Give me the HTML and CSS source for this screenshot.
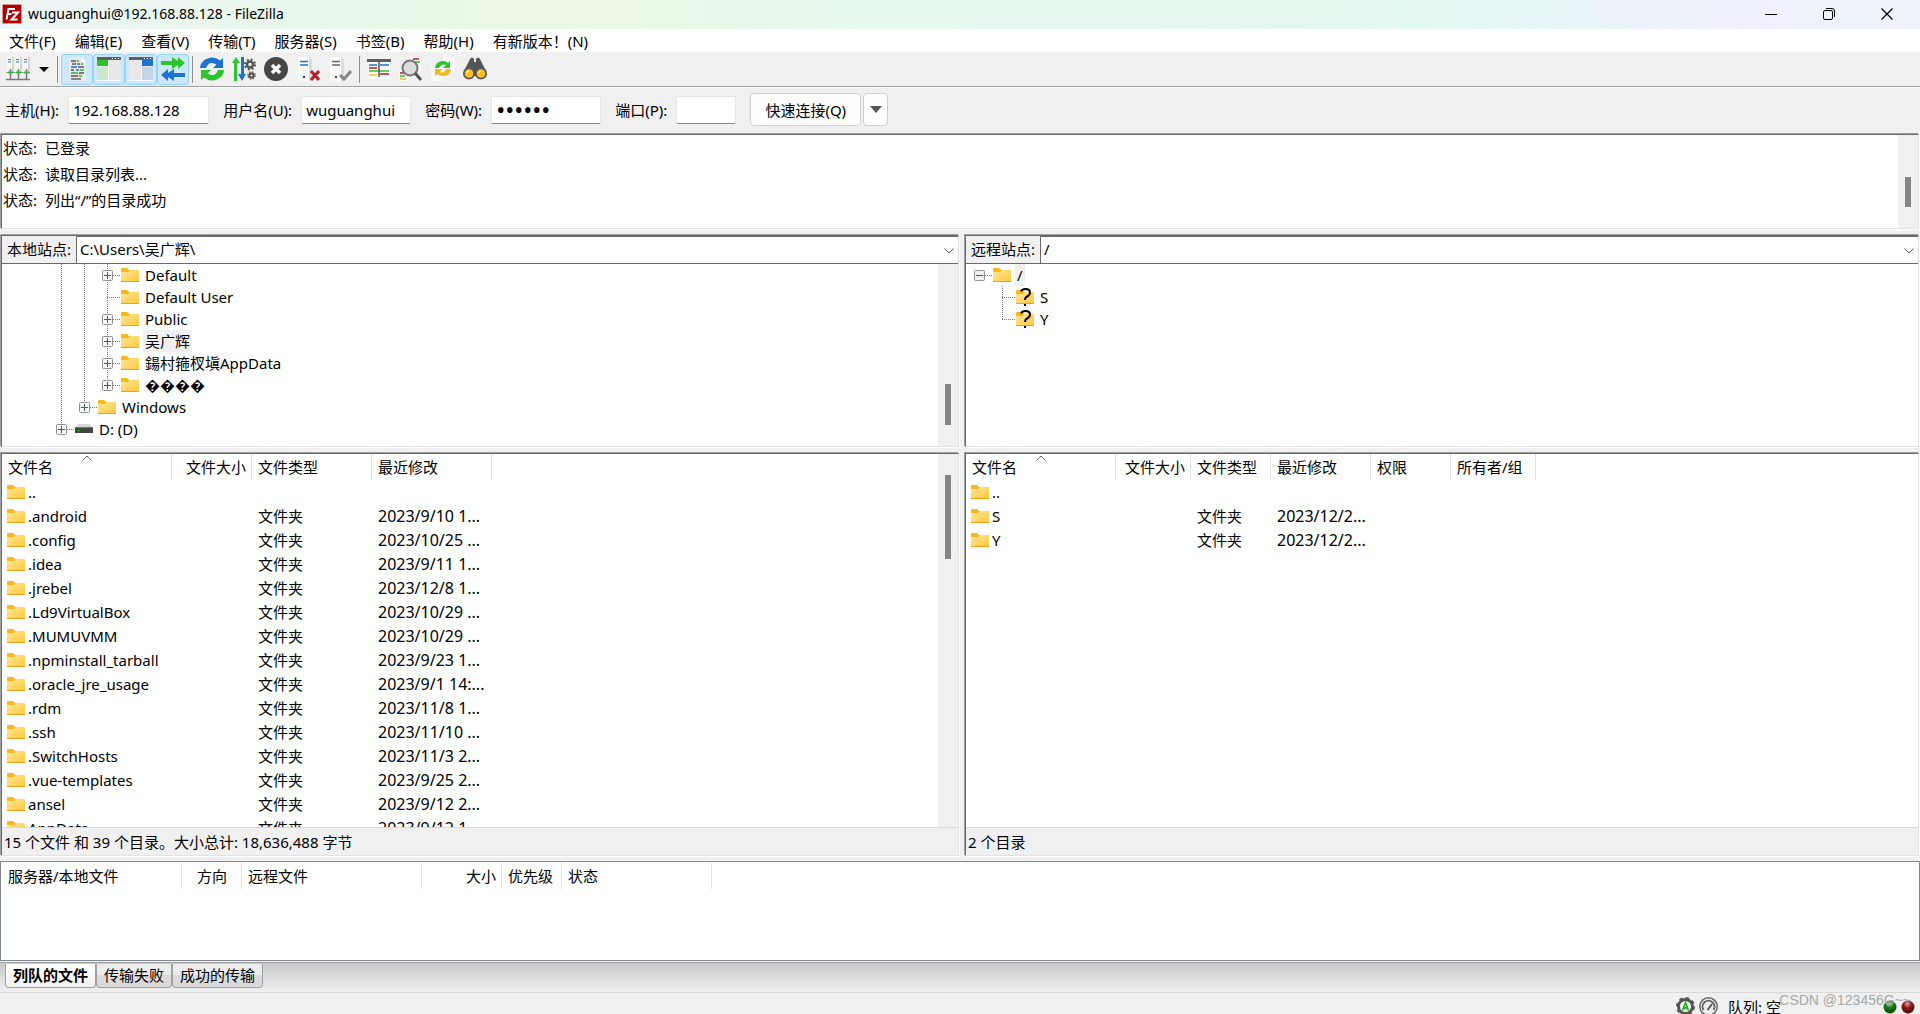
FILE: index.html
```html
<!DOCTYPE html>
<html lang="zh-CN">
<head>
<meta charset="utf-8">
<title>wuguanghui@192.168.88.128 - FileZilla</title>
<link rel="stylesheet" href="styles.css">
</head>
<body>
<svg class="defs" aria-hidden="true">
  <defs>
    <linearGradient id="fold" x1="0" y1="0" x2="1" y2="1"><stop offset="0" stop-color="#ffe79a"/><stop offset="1" stop-color="#ffc83a"/></linearGradient>
    <radialGradient id="ledG" cx=".45" cy=".25" r=".8"><stop offset="0" stop-color="#a8d8a8"/><stop offset=".4" stop-color="#1c7a1c"/><stop offset="1" stop-color="#054005"/></radialGradient>
    <radialGradient id="ledR" cx=".45" cy=".25" r=".8"><stop offset="0" stop-color="#e0a8a8"/><stop offset=".4" stop-color="#8a1c1c"/><stop offset="1" stop-color="#480505"/></radialGradient>
    <symbol id="folder" viewBox="0 0 18 14"><path d="M0 1q0-1 1-1h5l2 2h10v11H0z" fill="#f9b81c"/><path d="M0 4h7l2-2h9v12H0z" fill="url(#fold)"/><path d="M0 13h18v1H0z" fill="#e9a21a"/></symbol>
    <symbol id="plus" viewBox="0 0 11 11"><rect x=".5" y=".5" width="10" height="10" rx="1" fill="#f8f8f8" stroke="#919191"/><path d="M2 5.500h7M5.500 2v7" stroke="#3a569c"/></symbol>
    <symbol id="minus" viewBox="0 0 11 11"><rect x=".5" y=".5" width="10" height="10" rx="1" fill="#f0f0f0" stroke="#919191"/><path d="M2 5.500h7" stroke="#3a569c"/></symbol>
    <symbol id="unknown" viewBox="0 0 18 18"><path d="M0 3q0-1 1-1h5l2 2h10v11H0z" fill="#f9b81c"/><path d="M0 6h7l2-2h9v12H0z" fill="url(#fold)"/><path d="M0 15h18v1H0z" fill="#e9a21a"/><path d="M5 3.500Q6 1 9.500 1 14 1 14 4.500 14 7 11 8.500 9 9.500 9 12" fill="none" stroke="#000" stroke-width="2"/><path d="M8 16h2v2H8z"/></symbol>
    <symbol id="chev" viewBox="0 0 10 6"><path d="M.5.5 5 5 9.500.5" fill="none" stroke="#555"/></symbol>
    <symbol id="sort" viewBox="0 0 10 6"><path d="M.5 5.500 5 1l4.500 4.500" fill="none" stroke="#666"/></symbol>
  </defs>
</svg>
<div class="app">
  <header class="titlebar">
    <svg class="logo" viewBox="0 0 20 20"><rect x=".5" y=".5" width="19" height="19" fill="#b30000" stroke="#e8b0b0" stroke-dasharray="1 1"/><path d="M4.500 15.500 6.500 5H13M5.500 10h4M10 8.500h6L9.500 15.500h6" fill="none" stroke="#fff" stroke-width="2"/></svg>
    <h1 class="title">wuguanghui@192.168.88.128 - FileZilla</h1>
    <div class="winctl">
      <button aria-label="最小化"><svg width="12" height="12"><path d="M0 6.500h12" stroke="#000"/></svg></button>
      <button aria-label="还原"><svg width="12" height="12" fill="none" stroke="#000"><rect x=".5" y="2.500" width="9" height="9" rx="1.500"/><path d="M3 .5h6q2.500 0 2.500 2.500v6"/></svg></button>
      <button aria-label="关闭"><svg width="12" height="12"><path d="m.5.5 11 11m0-11-11 11" stroke="#000" stroke-width="1.200"/></svg></button>
    </div>
  </header>
  <nav class="menu">
    <button>文件(F)</button><button>编辑(E)</button><button>查看(V)</button><button>传输(T)</button><button>服务器(S)</button><button>书签(B)</button><button>帮助(H)</button><button>有新版本！(N)</button>
  </nav>
  <div class="toolbar">
    <button class="tool" aria-label="站点管理器"><svg viewBox="0 0 24 24"><g fill="#d6d6d6"><path d="M1 0h7v16H1zM9 0h7v16H9zM17 0h7v16h-7z"/></g><g fill="#fafafa"><path d="M1 0h5v16H1zM9 0h5v16H9zM17 0h5v16h-5z"/></g><path d="M2 2.500h3M10 2.500h3M18 2.500h3M2 5h3M10 5h3M18 5h3" stroke="#2a76c9"/><path d="M0 15.500h24" stroke="#999"/><path d="M4.500 12v11M12.500 12v11M20.500 12v11M0 22.500h24" stroke="#777" stroke-width="1.500"/><path d="M2 15.500h5M10 15.500h5M18 15.500h5" stroke="#36b636" stroke-width="2"/></svg></button>
    <button class="drop" aria-label="站点列表"><svg width="10" height="5"><path d="M0 0h10L5 5z"/></svg></button>
    <span class="sep"></span>
    <button class="tool on" aria-label="消息日志"><svg viewBox="0 0 24 24"><path d="M4 0h12l5 5v19H4z" fill="#e9e9ea"/><path d="m16 0 5 5h-5z" fill="#fff"/><g stroke-width="1.500"><path d="M6 4h5M7 7h4M13 10h6M6 13h3M14 16h5M6 19h7" stroke="#555"/><path d="M12 7h3M6 10h6M11 13h3" stroke="#1f6fd0"/><path d="M12 4h2M16 7h2M15 13h4M6 16h7M14 19h3" stroke="#28b828"/><path d="M6 22h10" stroke="#666"/></g></svg></button>
    <button class="tool on" aria-label="本地目录树"><svg viewBox="0 0 24 24"><path d="M0 0h24v24H0z" fill="#e8e8e8"/><path d="M0 0h24v3H0z" fill="#606060"/><path d="M15 1.500h1M18 1.500h1M21 1.500h1" stroke="#fff"/><path d="M0 3h11v6H0z" fill="#2bc52b"/><path d="M0 10h11v13H0z" fill="#cce8cc"/><path d="M11.500 3v21M0 23.500h24" stroke="#fafafa"/></svg></button>
    <button class="tool on" aria-label="远程目录树"><svg viewBox="0 0 24 24"><path d="M0 0h24v24H0z" fill="#e8e8e8"/><path d="M0 0h24v3H0z" fill="#606060"/><path d="M15 1.500h1M18 1.500h1M21 1.500h1" stroke="#fff"/><path d="M13 3h11v6H13z" fill="#1d74cf"/><path d="M13 10h11v13H13z" fill="#c4d5e8"/><path d="M12.500 3v21M0 23.500h24" stroke="#fafafa"/></svg></button>
    <button class="tool on" aria-label="传输队列"><svg viewBox="0 0 24 24"><path d="M0 4h11V0l6 4V0l7 6-7 6V8l-6 4V8H0z" fill="#2bc52b"/><path d="M24 16H13v-4l-6 4v-4l-7 6 7 6v-4l6 4v-4h11z" fill="#1d74cf"/></svg></button>
    <span class="sep"></span>
    <button class="tool" aria-label="刷新"><svg viewBox="0 0 24 24"><path d="M0 11A12 11 0 0 1 20 3.500L23 1v10H13l3.500-3.500Q9 3 6 11z" fill="#1d74cf"/><path d="M24 13A12 11 0 0 1 4 20.500L1 23V13h10l-3.500 3.500Q15 21 18 13z" fill="#2bc52b"/></svg></button>
    <button class="tool" aria-label="处理队列"><svg viewBox="0 0 24 24"><path d="M4 0 8 6H5v5h3H5v4h3H5v9H2v-9H0h2v-4H0h2V6H0z" fill="#2bc52b"/><path d="M9 0h3v17h2l-4 7-4-7h3z" fill="#1d74cf"/><g fill="none" stroke="#555"><circle cx="18" cy="7.500" r="3" stroke-width="2.500"/><circle cx="18" cy="7.500" r="5" stroke-width="2" stroke-dasharray="2 1.930"/><circle cx="19.500" cy="18.500" r="2" stroke-width="2"/><circle cx="19.500" cy="18.500" r="3.500" stroke-width="1.500" stroke-dasharray="1.500 1.250"/></g></svg></button>
    <button class="tool" aria-label="取消"><svg viewBox="0 0 24 24"><circle cx="12" cy="12" r="12" fill="#464646"/><path d="m8 8 8 8m0-8-8 8" stroke="#fff" stroke-width="3.500"/></svg></button>
    <button class="tool" aria-label="断开"><svg viewBox="0 0 24 24"><path d="M2 0h11l3 2v22H2z" fill="#dcdcdc"/><path d="M2 0h11v24H2z" fill="#fafafa"/><path d="M4 4.500h8M4 8h8" stroke="#1d74cf" stroke-width="1.500"/><path d="M7 19h2v2H7z" fill="#444"/><path d="m15 14 8 9m0-9-8 9" stroke="#b81d24" stroke-width="3"/></svg></button>
    <button class="tool" aria-label="重新连接"><svg viewBox="0 0 24 24"><path d="M2 0h11l3 2v22H2z" fill="#dcdcdc"/><path d="M2 0h11v24H2z" fill="#fafafa"/><path d="M4 4.500h8M4 8h8" stroke="#666" stroke-width="1.500"/><path d="M7 19h2v2H7z" fill="#444"/><path d="m12 18 4 4 7-8" fill="none" stroke="#858585" stroke-width="3"/></svg></button>
    <span class="sep"></span>
    <button class="tool" aria-label="目录比较"><svg viewBox="0 0 24 24"><path d="M1 3h22v19H1z" fill="#fafafa"/><path d="M0 2h24v3H0z" fill="#606060"/><g stroke-width="1.500"><path d="M2 11h8M13 17h9" stroke="#b81d24"/><path d="M13 8h9M2 8h8" stroke="#1d74cf"/><path d="M2 14h20" stroke="#2bc52b"/><path d="M2 18h8" stroke="#f5c021"/></g><path d="M12 5v15" stroke="#555" stroke-width="1.500"/></svg></button>
    <button class="tool" aria-label="搜索"><svg viewBox="0 0 24 24"><path d="M11 0h11v14H11zM0 12h10v12H0z" fill="#fafafa"/><path d="M14 2h6M1 16h4" stroke="#b81d24" stroke-width="1.500"/><path d="M16 5h5M1 19h5" stroke="#2bc52b" stroke-width="1.500"/><path d="M1 22h6" stroke="#f5c021" stroke-width="1.500"/><circle cx="11" cy="11" r="7.500" fill="#dcdcdc" stroke="#777" stroke-width="2"/><path d="m16 16 6 7" stroke="#555" stroke-width="3"/></svg></button>
    <button class="tool" aria-label="同步浏览"><svg viewBox="0 0 24 24"><path d="M12 0h12v15H12zM0 10h12v14H0z" fill="#fafafa"/><path d="M4 11Q5 4 12 4q3 0 5 2l2-2v7h-7l3-3q-5-2-7 3z" fill="#2bc52b"/><path d="M20 12q-1 7-8 7-3 0-5-2l-3 2v-7h7l-2 3q4 2 6-3z" fill="#f0b818"/></svg></button>
    <button class="tool" aria-label="查找文件"><svg viewBox="0 0 24 24"><path d="m1 14 6-12q2-3 4 0v3h2V2q2-3 4 0l6 12v5H1z" fill="#555"/><circle cx="6" cy="16.500" r="6" fill="#555"/><circle cx="18" cy="16.500" r="6" fill="#555"/><circle cx="6" cy="16.500" r="4.300" fill="#ffc020"/><circle cx="18" cy="16.500" r="4.300" fill="#ffc020"/><path d="M4 16q0-2 2-2M16 16q0-2 2-2" fill="none" stroke="#fff"/></svg></button>
  </div>
  <form class="quick">
    <label class="field">主机(H):<input class="host" type="text" value="192.168.88.128"></label>
    <label class="field">用户名(U):<input class="user" type="text" value="wuguanghui"></label>
    <label class="field">密码(W):<input class="pass" type="password" value="123456"></label>
    <label class="field">端口(P):<input class="port" type="text"></label>
    <div class="connect"><button class="btn go" type="button">快速连接(Q)</button><button class="btn more" type="button" aria-label="历史"><svg width="12" height="7"><path d="M0 0h12L6 7z" fill="#555"/></svg></button></div>
  </form>
  <section class="log sunken">
    <dl><dt>状态:</dt><dd>已登录</dd><dt>状态:</dt><dd>读取目录列表...</dd><dt>状态:</dt><dd>列出“/”的目录成功</dd></dl>
    <div class="scroll"><i class="thumb log-thumb"></i></div>
  </section>
  <main class="sites">
    <section class="site">
      <div class="treebox sunken">
        <div class="path"><label for="lp">本地站点:</label><div class="combo"><select id="lp"><option>C:\Users\吴广辉\</option></select><svg class="chev"><use href="#chev"/></svg></div></div>
        <div class="pane">
          <ul class="tree local">
            <li><i class="g v"></i><i class="g v"></i><i class="g v b"><svg><use href="#plus"/></svg></i><svg class="fi"><use href="#folder"/></svg><span>Default</span></li>
            <li><i class="g v"></i><i class="g v"></i><i class="g v h"></i><svg class="fi"><use href="#folder"/></svg><span>Default User</span></li>
            <li><i class="g v"></i><i class="g v"></i><i class="g v b"><svg><use href="#plus"/></svg></i><svg class="fi"><use href="#folder"/></svg><span>Public</span></li>
            <li><i class="g v"></i><i class="g v"></i><i class="g v b"><svg><use href="#plus"/></svg></i><svg class="fi"><use href="#folder"/></svg><span class="sel">吴广辉</span></li>
            <li><i class="g v"></i><i class="g v"></i><i class="g v b"><svg><use href="#plus"/></svg></i><svg class="fi"><use href="#folder"/></svg><span>鍚村箍杈塡AppData</span></li>
            <li><i class="g v"></i><i class="g v"></i><i class="g e b"><svg><use href="#plus"/></svg></i><svg class="fi"><use href="#folder"/></svg><span>����</span></li>
            <li><i class="g v"></i><i class="g e b"><svg><use href="#plus"/></svg></i><svg class="fi"><use href="#folder"/></svg><span>Windows</span></li>
            <li><i class="g e b"><svg><use href="#plus"/></svg></i><svg class="fi" viewBox="0 0 18 14"><path d="m3 2h12l3 4H0z" fill="#d8d8d8"/><path d="M0 5h18v6H0z" fill="#454545"/><path d="M0 5h18v1H0z" fill="#777"/><path d="M3 8h1v1H3z" fill="#3f3"/></svg><span>D: (D)</span></li>
          </ul>
          <div class="scroll"><i class="thumb tree-thumb"></i></div>
        </div>
      </div>
      <div class="listbox sunken">
        <div class="pane">
          <div class="view">
          <table class="files">
            <colgroup><col class="w170"><col class="w80"><col class="w120"><col class="w120"></colgroup>
            <thead><tr><th>文件名<svg class="sort"><use href="#sort"/></svg></th><th class="r">文件大小</th><th>文件类型</th><th>最近修改</th></tr></thead>
            <tbody>
            <tr><td><svg class="fi"><use href="#folder"/></svg>..</td><td></td><td></td><td></td></tr>
            <tr><td><svg class="fi"><use href="#folder"/></svg>.android</td><td></td><td>文件夹</td><td class="date">2023/9/10 1...</td></tr>
            <tr><td><svg class="fi"><use href="#folder"/></svg>.config</td><td></td><td>文件夹</td><td class="date">2023/10/25 ...</td></tr>
            <tr><td><svg class="fi"><use href="#folder"/></svg>.idea</td><td></td><td>文件夹</td><td class="date">2023/9/11 1...</td></tr>
            <tr><td><svg class="fi"><use href="#folder"/></svg>.jrebel</td><td></td><td>文件夹</td><td class="date">2023/12/8 1...</td></tr>
            <tr><td><svg class="fi"><use href="#folder"/></svg>.Ld9VirtualBox</td><td></td><td>文件夹</td><td class="date">2023/10/29 ...</td></tr>
            <tr><td><svg class="fi"><use href="#folder"/></svg>.MUMUVMM</td><td></td><td>文件夹</td><td class="date">2023/10/29 ...</td></tr>
            <tr><td><svg class="fi"><use href="#folder"/></svg>.npminstall_tarball</td><td></td><td>文件夹</td><td class="date">2023/9/23 1...</td></tr>
            <tr><td><svg class="fi"><use href="#folder"/></svg>.oracle_jre_usage</td><td></td><td>文件夹</td><td class="date">2023/9/1 14:...</td></tr>
            <tr><td><svg class="fi"><use href="#folder"/></svg>.rdm</td><td></td><td>文件夹</td><td class="date">2023/11/8 1...</td></tr>
            <tr><td><svg class="fi"><use href="#folder"/></svg>.ssh</td><td></td><td>文件夹</td><td class="date">2023/11/10 ...</td></tr>
            <tr><td><svg class="fi"><use href="#folder"/></svg>.SwitchHosts</td><td></td><td>文件夹</td><td class="date">2023/11/3 2...</td></tr>
            <tr><td><svg class="fi"><use href="#folder"/></svg>.vue-templates</td><td></td><td>文件夹</td><td class="date">2023/9/25 2...</td></tr>
            <tr><td><svg class="fi"><use href="#folder"/></svg>ansel</td><td></td><td>文件夹</td><td class="date">2023/9/12 2...</td></tr>
            <tr><td><svg class="fi"><use href="#folder"/></svg>AppData</td><td></td><td>文件夹</td><td class="date">2023/9/12 1...</td></tr>
            </tbody>
          </table>
          </div>
          <div class="scroll"><i class="thumb list-thumb"></i></div>
        </div>
        <p class="summary">15 个文件 和 39 个目录。大小总计: 18,636,488 字节</p>
      </div>
    </section>
    <section class="site">
      <div class="treebox sunken">
        <div class="path"><label for="rp">远程站点:</label><div class="combo"><select id="rp"><option>/</option></select><svg class="chev"><use href="#chev"/></svg></div></div>
        <div class="pane">
          <ul class="tree">
            <li><i class="g b"><svg><use href="#minus"/></svg></i><svg class="fi"><use href="#folder"/></svg><span class="sel">/</span></li>
            <li><i class="g"></i><i class="g v h"></i><svg class="fi q"><use href="#unknown"/></svg><span>S</span></li>
            <li><i class="g"></i><i class="g e h"></i><svg class="fi q"><use href="#unknown"/></svg><span>Y</span></li>
          </ul>
        </div>
      </div>
      <div class="listbox sunken">
        <div class="pane">
          <div class="view">
          <table class="files">
            <colgroup><col class="w150"><col class="w75"><col class="w80"><col class="w100"><col class="w80"><col class="w85"></colgroup>
            <thead><tr><th>文件名<svg class="sort"><use href="#sort"/></svg></th><th class="r">文件大小</th><th>文件类型</th><th>最近修改</th><th>权限</th><th>所有者/组</th></tr></thead>
            <tbody>
            <tr><td><svg class="fi"><use href="#folder"/></svg>..</td><td></td><td></td><td></td><td></td><td></td></tr>
            <tr><td><svg class="fi"><use href="#folder"/></svg>S</td><td></td><td>文件夹</td><td class="date">2023/12/2...</td><td></td><td></td></tr>
            <tr><td><svg class="fi"><use href="#folder"/></svg>Y</td><td></td><td>文件夹</td><td class="date">2023/12/2...</td><td></td><td></td></tr>
            </tbody>
          </table>
          </div>
        </div>
        <p class="summary">2 个目录</p>
      </div>
    </section>
  </main>
  <section class="queue">
    <table class="files">
      <colgroup><col class="w180"><col class="w60"><col class="w180"><col class="w80"><col class="w60"><col class="w150"></colgroup>
      <thead><tr><th>服务器/本地文件</th><th class="c">方向</th><th>远程文件</th><th class="r">大小</th><th>优先级</th><th>状态</th></tr></thead>
    </table>
  </section>
  <div class="tabs" role="tablist">
    <button role="tab" aria-selected="true" class="tab active">列队的文件</button><button role="tab" class="tab">传输失败</button><button role="tab" class="tab">成功的传输</button>
  </div>
  <footer class="status">
    <svg width="19" height="19" viewBox="0 0 19 19"><circle cx="9.500" cy="9.500" r="7" fill="#fff" stroke="#555" stroke-width="3"/><circle cx="9.500" cy="9.500" r="8.500" fill="none" stroke="#555" stroke-width="2" stroke-dasharray="3.340"/><path d="M6.500 13.500 9.500 5.500l3 8M7.500 11h4" fill="none" stroke="#1fb81f" stroke-width="1.800"/></svg>
    <svg width="19" height="19" viewBox="0 0 19 19"><circle cx="9.500" cy="9.500" r="8.700" fill="#eee" stroke="#666" stroke-width="1.500"/><path d="M4.500 13a6 6 0 1 1 10 0" fill="none" stroke="#666" stroke-width="2"/><path d="m8.500 13 4.500-6" stroke="#555" stroke-width="2"/></svg>
    <span class="qsize">队列: 空</span>
    <span class="leds"><svg width="14" height="14"><circle cx="7" cy="7" r="6.500" fill="url(#ledG)"/></svg><svg width="14" height="14"><circle cx="7" cy="7" r="6.500" fill="url(#ledR)"/></svg></span>
    <span class="mark">CSDN @123456G~~</span>
  </footer>
</div>
</body>
</html>
```
FILE: styles.css
```css
* { box-sizing: border-box; }
body {
  margin: 0;
  font: 15px/22px "Noto Sans", "Noto Sans CJK SC", sans-serif;
  color: #000;
  background: #f0f0f0;
  overflow: hidden;
}
button, input, select { font: inherit; color: inherit; }
button { padding: 0; border: 0; background: none; }
svg { display: block; flex: none; }
ul, dl, dd, p, h1 { margin: 0; padding: 0; }
.defs { position: absolute; width: 0; height: 0; }

.app { display: flex; flex-direction: column; height: 100vh; }

/* title bar and menu */
.titlebar {
  display: flex;
  align-items: center;
  height: 29px;
  flex: none;
  padding: 0 4px 1px 2px;
  background: linear-gradient(90deg, #eef5f6, #e8f7ea 16%, #ebf8e5 30%, #e6f7ec 45%, #e5f7ec 68%, #e3f7f4 76%, #eef1fb 89%, #eff3fb);
}
.logo { width: 20px; height: 20px; }
.title { flex: 1; margin-left: 6px; font-size: 14px; font-weight: 400; }
.winctl { display: flex; }
.winctl button { width: 58px; height: 28px; display: grid; place-items: center; }
.menu { display: flex; height: 23px; flex: none; padding-left: 9px; gap: 19px; background: #fff; }

/* toolbar */
.toolbar {
  display: flex;
  align-items: center;
  height: 36px;
  flex: none;
  padding: 0 2px 1px;
  border-bottom: 1px solid #fff;
  box-shadow: inset 0 -1px #a0a0a0;
}
.tool { width: 32px; height: 31px; display: grid; place-items: center; border: 1px solid transparent; border-radius: 3px; }
.tool svg { width: 24px; height: 24px; }
.tool.on { background: #cce8ff; border-color: #99d1ff; }
.drop { width: 20px; height: 31px; display: grid; place-items: center; }
.sep { width: 1px; height: 27px; margin: 0 3px; background: #8d8d8d; }

/* quick connect */
.quick { display: flex; align-items: center; height: 45px; flex: none; padding: 0 5px 2px; gap: 14px; }
.field { display: flex; align-items: center; gap: 9px; white-space: nowrap; }
.field input {
  height: 28px;
  padding: 0 4px;
  border: 1px solid #e5e5e5;
  border-bottom-color: #868686;
  border-radius: 2px;
  background: #fff;
}
.host { width: 141px; }
.user, .pass { width: 110px; }
.field .pass { font-size: 24px; }
.port { width: 60px; }
.connect { display: flex; gap: 2px; }
.btn { height: 33px; border: 1px solid #d0d0d0; border-radius: 4px; background: #fdfdfd; }
.go { width: 111px; }
.more { width: 25px; display: grid; place-items: center; }

/* sunken frames */
.sunken {
  margin: 1px;
  border: 1px solid;
  border-color: #696969 #e3e3e3 #e3e3e3 #696969;
  box-shadow: -1px -1px #a0a0a0, 1px 1px #fff;
  background: #fff;
}
.scroll { width: 20px; flex: none; display: flex; flex-direction: column; align-items: center; background: #f0f0f0; }
.thumb { width: 6px; background: #858585; }
.log-thumb { height: 30px; margin-top: 42px; }
.tree-thumb { height: 41px; margin-top: 120px; }
.list-thumb { height: 84px; margin-top: 21px; }

.log { display: flex; height: 95px; flex: none; }
.log dl { flex: 1; display: grid; grid-template-columns: 42px 1fr; grid-auto-rows: 26px; line-height: 26px; padding-left: 1px; }

/* local and remote sites */
.sites { flex: 1; min-height: 0; display: flex; gap: 4px; margin-top: 4px; }
.site { flex: 1; min-width: 0; display: flex; flex-direction: column; }
.site:first-child { flex: 0 0 50%; }
.treebox { display: flex; flex-direction: column; height: 212px; flex: none; }
.listbox { display: flex; flex-direction: column; flex: 1; min-height: 0; margin-top: 5px; }
.path { display: flex; height: 28px; flex: none; border-bottom: 1px solid #696969; }
.path label { width: 75px; padding-left: 5px; line-height: 26px; white-space: nowrap; background: #f0f0f0; border-right: 1px solid #696969; }
.combo { flex: 1; position: relative; border-top: 1px solid #696969; }
.combo select { appearance: none; width: 100%; height: 26px; padding: 0 3px 2px; border: 0; background: #fff; }
.chev { position: absolute; right: 4px; top: 11px; width: 10px; height: 6px; pointer-events: none; }
.pane { flex: 1; min-height: 0; display: flex; }

.tree { flex: 1; list-style: none; overflow: hidden; padding: 0 2px; }
.tree.local { padding-left: 48px; }
.tree li { display: flex; align-items: center; height: 22px; }
.tree span { margin-left: 4px; padding: 0 2px; white-space: pre; }
.sel { background: #f0f0f0; }
.g { width: 23px; height: 22px; display: grid; place-items: center; position: relative; }
.g svg { width: 11px; height: 11px; position: relative; }
.v { background: repeating-linear-gradient(#777 0 1px, transparent 1px 2px) 11px 0 / 1px 22px no-repeat; }
.e { background: repeating-linear-gradient(#777 0 1px, transparent 1px 2px) 11px 0 / 1px 11px no-repeat; }
.b::after, .h::after {
  content: "";
  position: absolute;
  top: 11px;
  left: 17px;
  right: -2px;
  height: 1px;
  background: repeating-linear-gradient(90deg, #777 0 1px, transparent 1px 2px);
}
.h::after { left: 11px; }
.fi { width: 18px; height: 14px; }
.tree .fi { margin-left: 2px; }
.tree .q { height: 18px; }

/* file lists */
.view { flex: 1; overflow: hidden; }
.files { table-layout: fixed; width: 0; border-spacing: 0; }
.files th { height: 26px; padding: 0 5px 0 6px; font-weight: 400; text-align: left; border-right: 1px solid #e0e0e0; position: relative; white-space: nowrap; }
.files .r { text-align: right; }
.files .c { text-align: center; }
.files td { height: 24px; padding: 0 0 0 6px; white-space: nowrap; }
.files td:first-child { padding-left: 5px; }
.files .date { font-size: 16px; }
.files td .fi { display: inline-block; vertical-align: -1px; margin-right: 3px; }
.sort { position: absolute; top: 1px; left: 50%; width: 10px; height: 6px; margin-left: -5px; }
.w60 { width: 60px; } .w75 { width: 75px; } .w80 { width: 80px; } .w85 { width: 85px; }
.w100 { width: 100px; } .w120 { width: 120px; } .w150 { width: 150px; } .w170 { width: 170px; } .w180 { width: 180px; }
.summary { height: 28px; flex: none; padding: 0 2px; line-height: 28px; border-top: 1px solid #d9d9d9; background: #f0f0f0; }

.queue { height: 100px; flex: none; margin-top: 4px; padding: 1px; border: 1px solid #828790; background: #fff; }

/* tabs and status bar */
.tabs {
  display: flex;
  height: 31px;
  flex: none;
  margin-top: 1px;
  padding: 1px 5px 4px;
  border-top: 1px solid #a0a0a0;
  border-bottom: 1px solid #d9d9d9;
  background: linear-gradient(#c8c8c8, #f0f0f0);
}
.tab { height: 24px; padding: 0 7px 2px; line-height: 20px; border: 1px solid #a0a0a0; border-top: 0; border-radius: 0 0 4px 4px; background: linear-gradient(#ececec 50%, #dadada 50%); }
.tab.active { background: linear-gradient(#fff, #f0f0f0); font-weight: 700; }
.status { position: relative; display: flex; align-items: flex-start; gap: 4px; height: 21px; flex: none; padding: 4px 5px 0; justify-content: flex-end; overflow: hidden; line-height: 20px; }
.qsize { width: 151px; margin-left: 6px; }
.leds { display: flex; gap: 4px; padding: 3px 0 0; }
.mark { position: absolute; right: 9px; top: 0; font: 14px/14px "Liberation Sans", sans-serif; color: #a8a8a8; }
```
